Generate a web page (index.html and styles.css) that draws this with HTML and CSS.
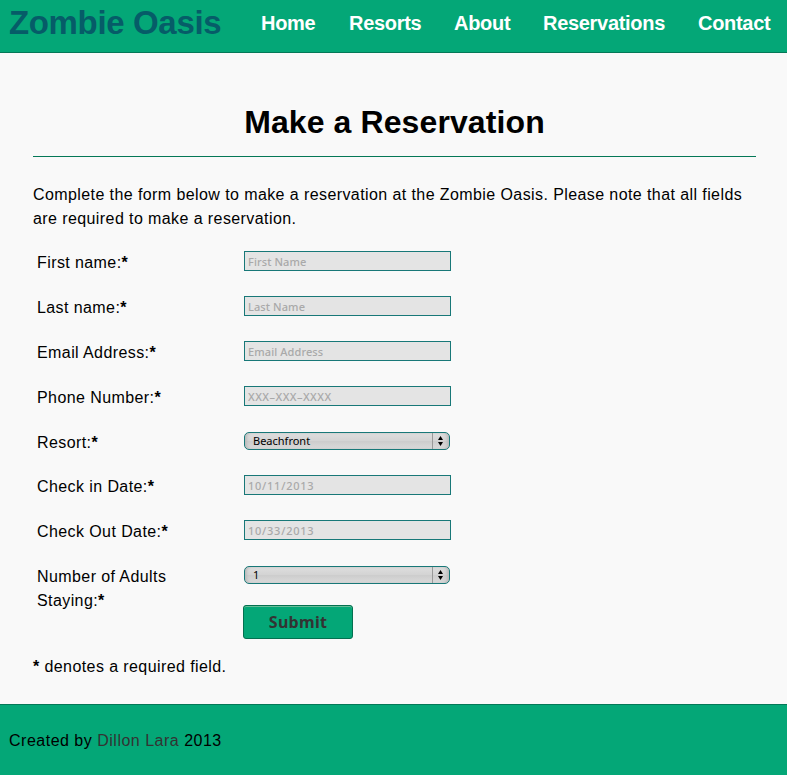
FILE: index.html
```html
<!DOCTYPE html>
<html lang="en">
<head>
<meta charset="utf-8">
<title>Zombie Oasis</title>
<link rel="stylesheet" href="styles.css">
</head>
<body>
<header class="top">
  <a class="logo">Zombie Oasis</a>
  <nav class="nav"><a class="n1">Home</a><a class="n2">Resorts</a><a class="n3">About</a><a class="n4">Reservations</a><a class="n5">Contact</a></nav>
</header>
<main class="main">
  <h1 class="title"><span>Make a Reservation</span></h1>
  <p class="intro">Complete the form below to make a reservation at the Zombie Oasis. Please note that all fields are required to make a reservation.</p>
  <form class="form">
    <div class="row"><label for="first">First name:<b>*</b></label><input id="first" type="text" placeholder="First Name"></div>
    <div class="row"><label for="last">Last name:<b>*</b></label><input id="last" type="text" placeholder="Last Name"></div>
    <div class="row"><label for="email">Email Address:<b>*</b></label><input id="email" type="text" placeholder="Email Address"></div>
    <div class="row"><label for="phone">Phone Number:<b>*</b></label><input id="phone" class="phone" type="text" placeholder="XXX–XXX–XXXX"></div>
    <div class="row short"><label>Resort:<b>*</b></label><div class="select"><span class="value">Beachfront</span><span class="arrows"><svg width="5" height="10" viewBox="0 0 5 10"><path d="M0 4L2.5 0L5 4ZM0 6H5L2.5 10Z"/></svg></span></div></div>
    <div class="row"><label for="in">Check in Date:<b>*</b></label><input id="in" class="date" type="text" placeholder="10/11/2013"></div>
    <div class="row"><label for="out">Check Out Date:<b>*</b></label><input id="out" class="date" type="text" placeholder="10/33/2013"></div>
    <div class="row last"><label>Number of Adults<br>Staying:<b>*</b></label><div class="controls"><div class="select"><span class="value">1</span><span class="arrows"><svg width="5" height="10" viewBox="0 0 5 10"><path d="M0 4L2.5 0L5 4ZM0 6H5L2.5 10Z"/></svg></span></div><button class="submit" type="button">Submit</button></div></div>
  </form>
  <p class="note"><b>*</b> denotes a required field.</p>
</main>
<footer class="footer">Created by <a>Dillon Lara</a> 2013</footer>
</body>
</html>
```

FILE: styles.css
```css
* { box-sizing: border-box; }
body {
  margin: 0;
  background: #f9f9f9;
  color: #000;
  font: 16px/24px "Liberation Sans", Arial, sans-serif;
  letter-spacing: 0.41px;
}
.top {
  display: flex;
  height: 53px;
  padding-left: 9px;
  background: #04a777;
  border-bottom: 1px solid #047857;
}
.logo {
  width: 252px;
  font-size: 33px;
  line-height: 46px;
  font-weight: bold;
  letter-spacing: -0.35px;
  color: #065c68;
  white-space: nowrap;
}
.nav {
  display: flex;
  font-size: 20px;
  line-height: 46px;
  font-weight: bold;
  letter-spacing: -0.3px;
  color: #fff;
  white-space: nowrap;
}
.n1 { width: 88px; }
.n2 { width: 105px; }
.n3 { width: 89px; }
.n4 { width: 155px; }
.main { height: 651px; padding: 45px 31px 0 33px; }
.title {
  height: 59px;
  margin: 0;
  border-bottom: 1px solid #047857;
  font-size: 32px;
  line-height: 48px;
  letter-spacing: 0.1px;
  text-align: center;
}
.intro { margin: 26px 0 20px; }
.form { display: flex; flex-direction: column; }
.row {
  display: grid;
  grid-template-columns: 207px 207px;
  align-items: start;
  height: 45px;
  padding-left: 4px;
}
.row.short { height: 44px; }
.row.last { grid-template-columns: 207px auto; height: 90px; }
.row label { width: 160px; }
input {
  width: 207px;
  height: 20px;
  margin: 0;
  padding: 0 3px;
  border: 1px solid #187878;
  border-radius: 0;
  background: #e4e4e4;
  font: 500 11px/15px "Noto Sans", sans-serif;
  letter-spacing: 0.1px;
}
input.phone { letter-spacing: 0.45px; }
input.date { letter-spacing: 0.75px; }
input::placeholder { color: #a9a9a9; opacity: 1; }
.select {
  display: flex;
  justify-content: space-between;
  width: 206px;
  height: 18px;
  margin-top: 1px;
  padding-left: 8px;
  border: 1px solid #187878;
  border-radius: 5px;
  background: linear-gradient(#dedede, #d4d4d4 47%, #cdcdcd 53%, #dadada);
  box-shadow: inset 3px 0 3px -1px #bbb, inset -3px 0 3px -1px #bbb;
  font: 11px/16px "Noto Sans", sans-serif;
  letter-spacing: 0;
}
.arrows {
  display: flex;
  align-items: center;
  width: 17px;
  padding-left: 5px;
  border-left: 1px solid #999;
}
.submit {
  display: block;
  width: 110px;
  height: 34px;
  margin: 21px 0 0 -1px;
  padding: 0;
  border: 1px solid #047050;
  border-radius: 3px;
  background: #04a777;
  box-shadow: inset 0 1px #67bd98;
  color: #333;
  font: bold 16px/32px "Noto Sans", sans-serif;
  letter-spacing: 0.3px;
}
.note { margin: 0; }
.footer {
  height: 71px;
  padding: 24px 9px 0;
  background: #04a777;
  border-top: 1px solid #047857;
  letter-spacing: 0.5px;
}
.footer a { color: #333; }
```
